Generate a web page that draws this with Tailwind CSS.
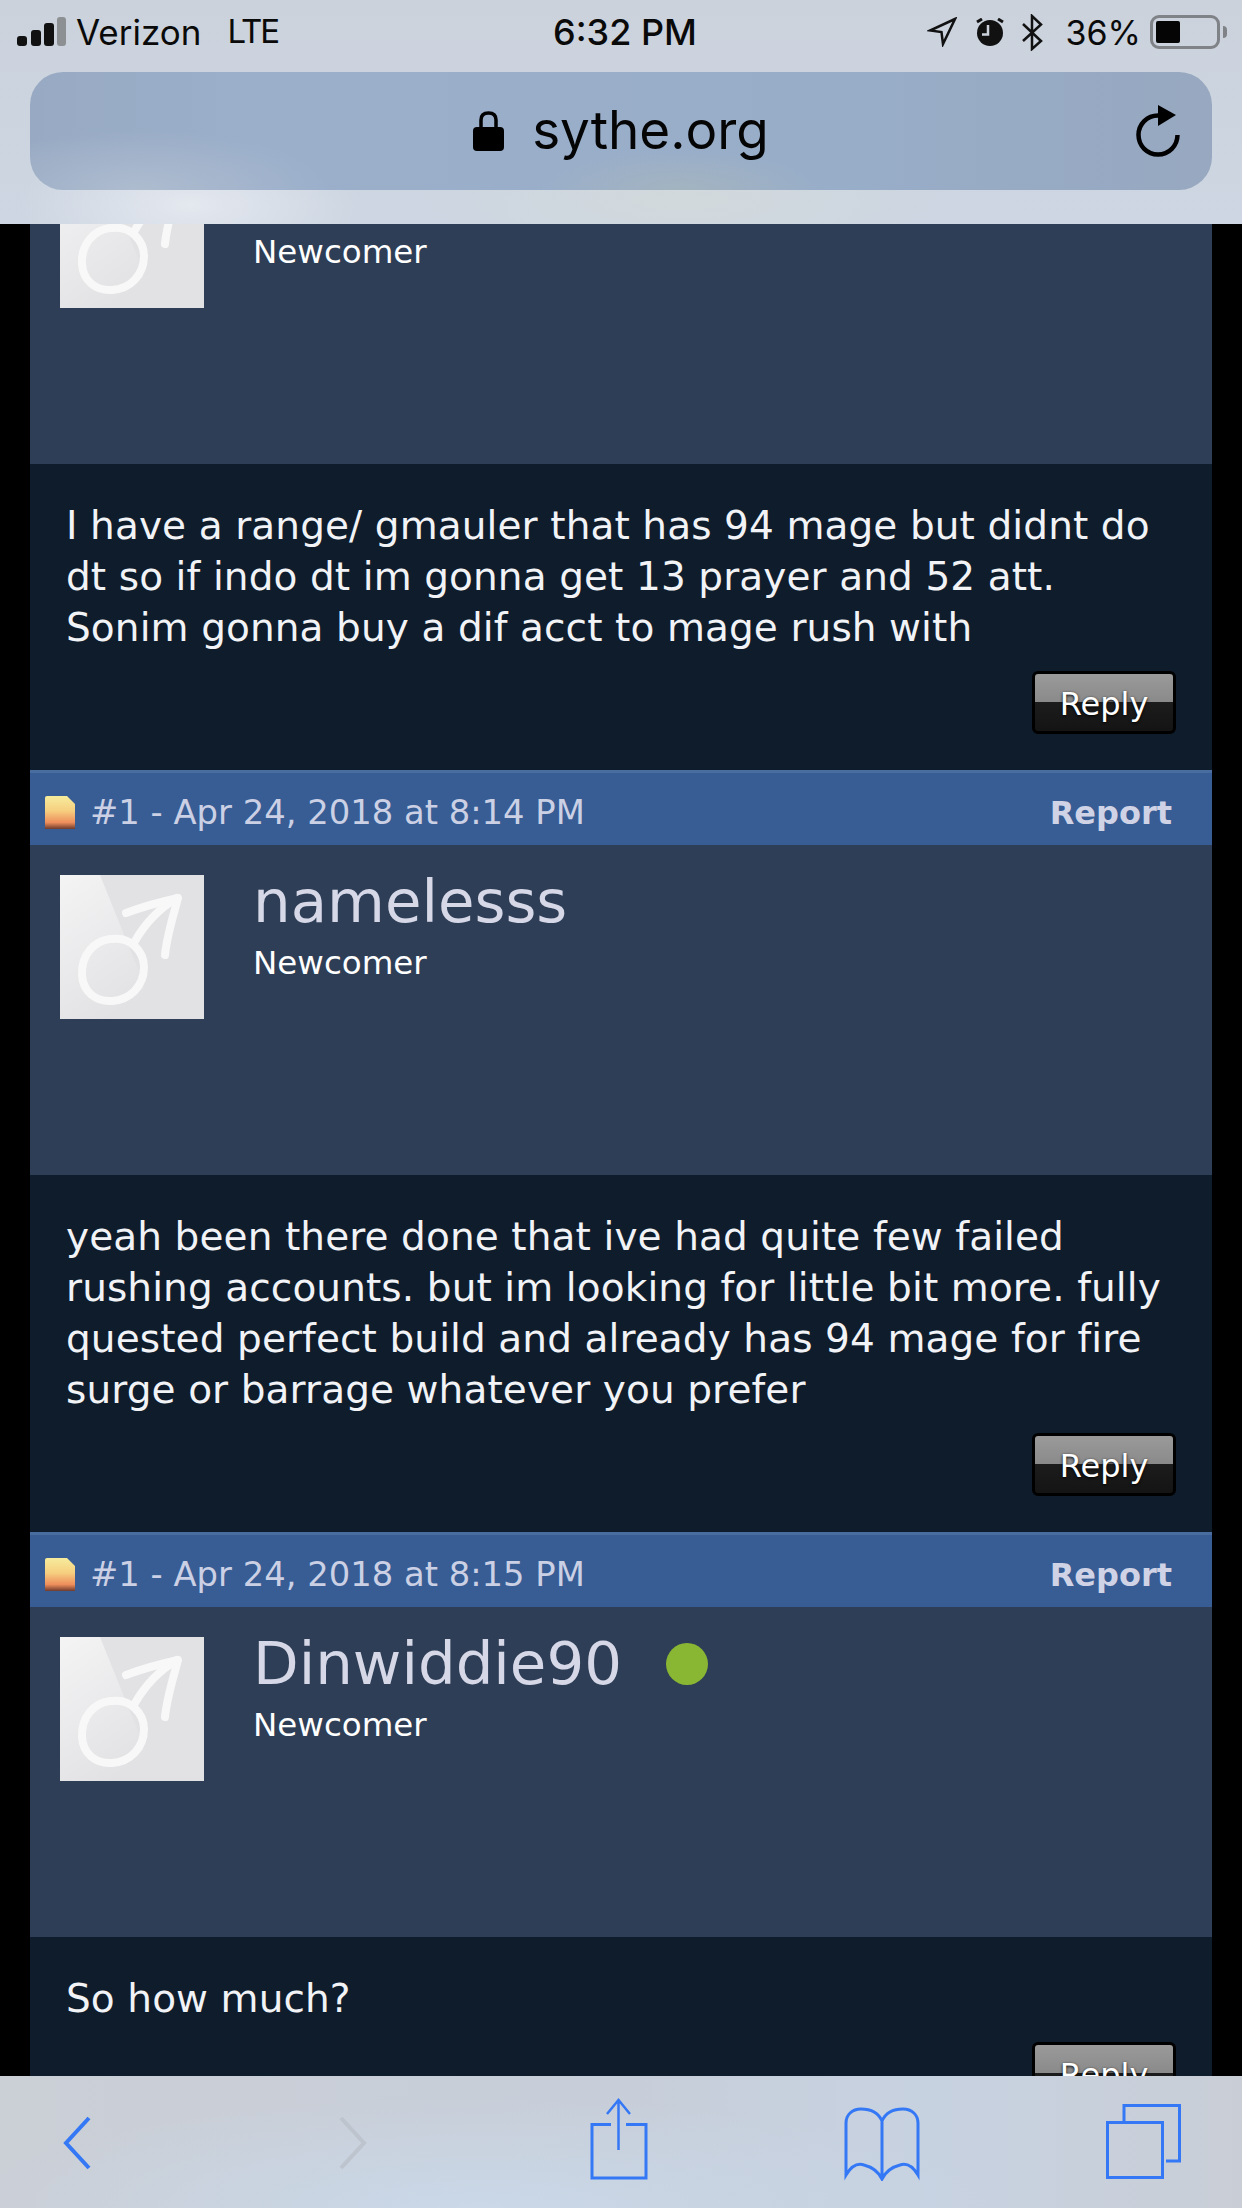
<!DOCTYPE html>
<html lang="en">
<head>
    <meta charset="UTF-8">
    <meta name="viewport" content="width=device-width, initial-scale=1.0">
    <title>sythe.org</title>
    <script src="https://cdn.jsdelivr.net/npm/@tailwindcss/browser@4"></script>
</head>
<body class="bg-black font-['DejaVu_Sans',sans-serif]">
    <!-- shared avatar -->
    <svg width="0" height="0" class="absolute">
        <defs>
            <linearGradient id="wedge" x1="0" y1="0" x2="0.5" y2="1">
                <stop offset="0" stop-color="#f4f4f5"/>
                <stop offset="1" stop-color="#e2e2e4"/>
            </linearGradient>
            <linearGradient id="note" x1="0" y1="0" x2="0" y2="1">
                <stop offset="0" stop-color="#f6ec9c"/>
                <stop offset="0.45" stop-color="#f6cf80"/>
                <stop offset="0.8" stop-color="#ee8f5c"/>
                <stop offset="1" stop-color="#6e3a2c"/>
            </linearGradient>
            <symbol id="male" viewBox="0 0 144 144">
                <rect width="144" height="144" fill="#e2e2e4"/>
                <path d="M0 0H40L98 144H0Z" fill="url(#wedge)"/>
                <g fill="none" stroke="#f8f8f9" stroke-width="8" stroke-linecap="round" stroke-linejoin="round">
                    <path d="M50 64C34 66 21 80 22 100C23 117 36 127 52 126C70 125 84 111 84 92C84 76 70 62 53 64"/>
                    <path d="M75 66C86 47 100 33 117 23"/>
                    <path d="M66 38C82 32 100 27 118 23C113 42 107 60 105 80"/>
                </g>
            </symbol>
            <symbol id="post" viewBox="0 0 30 33">
                <path d="M0 2Q0 0 2 0H22L30 8V33H0Z" fill="url(#note)"/>
            </symbol>
        </defs>
    </svg>

    <div class="w-[1242px] h-[2208px] flex flex-col overflow-hidden">
        <!-- safari top bar -->
        <header class="h-[224px] shrink-0 relative z-10 bg-[radial-gradient(ellipse_170px_70px_at_190px_205px,#e4e8ef,transparent),radial-gradient(ellipse_260px_60px_at_680px_200px,#d2d9dc,transparent),linear-gradient(#cbd2dc,#cdd6e2)]">
            <div class="h-[64px] flex items-center justify-between relative text-[#0a0a0a] font-['Inter',sans-serif]">
                <div class="flex items-center pl-[17px]">
                    <svg width="50" height="30" viewBox="0 0 50 30">
                        <rect x="0" y="19" width="10" height="10" rx="3" fill="#111"/>
                        <rect x="14" y="13" width="10" height="16" rx="3" fill="#111"/>
                        <rect x="27" y="6" width="10" height="23" rx="3" fill="#111"/>
                        <rect x="40" y="0" width="9" height="29" rx="3" fill="#8d9093"/>
                    </svg>
                    <span class="ml-[9px] text-[35px]">Verizon</span>
                    <span class="ml-[26px] text-[33px] tracking-[-2px]">LTE</span>
                </div>
                <span class="absolute left-[553px] text-[36px] font-medium">6:32 PM</span>
                <div class="flex items-center pr-[22px]">
                    <svg width="30" height="30" viewBox="0 0 30 30">
                        <path d="M28 2L3 13.500L14.500 15L16 27Z" fill="none" stroke="#111" stroke-width="2.500"/>
                    </svg>
                    <svg width="28" height="28" viewBox="0 0 28 28" class="ml-[19px]">
                        <circle cx="14" cy="15" r="13" fill="#111"/>
                        <path d="M12 7V16.500H6" fill="none" stroke="#cbd2dc" stroke-width="2.500"/>
                        <path d="M1 4L6 1M27 4L22 1" stroke="#111" stroke-width="3"/>
                    </svg>
                    <svg width="21" height="37" viewBox="0 0 21 37" class="ml-[18px]">
                        <path d="M1 10L19 27L10 35V2L19 10.500L1 27" fill="none" stroke="#111" stroke-width="2.500"/>
                    </svg>
                    <span class="ml-[23px] text-[34px]">36%</span>
                    <div class="ml-[9px] w-[70px] h-[34px] rounded-[9px] border-[3px] border-[#7f8287] p-[3px] relative">
                        <div class="w-[24px] h-full rounded-[2px] bg-[#050505]"></div>
                        <div class="absolute -right-[10px] top-[8px] w-[4px] h-[12px] rounded-r-full bg-[#7f8287]"></div>
                    </div>
                </div>
            </div>
            <div class="mt-[8px] mx-[30px] h-[118px] rounded-[33px] flex items-center justify-center relative bg-[radial-gradient(ellipse_190px_60px_at_110px_118px,#aebccf,transparent),radial-gradient(ellipse_140px_40px_at_650px_118px,#a3b4c0,transparent),linear-gradient(90deg,#98aac3,#9bafcb_20%,#98adc8_70%,#97a8c0)]">
                <svg width="31" height="40" viewBox="0 0 31 40" class="mr-[28px]">
                    <path d="M8 18V9C8 4 11 2 15.500 2C20 2 23 4 23 9V18" fill="none" stroke="#000" stroke-width="3.500"/>
                    <rect x="0" y="16" width="31" height="24" rx="4" fill="#000"/>
                </svg>
                <span class="text-[53px] text-[#050505] font-['Inter',sans-serif]">sythe.org</span>
                <svg width="44" height="52" viewBox="0 0 44 52" class="absolute right-[32px] top-[33px]">
                    <path d="M41.500 30A19.500 19.500 0 1 1 22 10.500" fill="none" stroke="#000" stroke-width="4.500"/>
                    <path d="M22 0L40 10L22 21Z" fill="#000"/>
                </svg>
            </div>
        </header>

        <!-- thread -->
        <main class="flex-1 min-h-0 overflow-hidden bg-black px-[30px]">
            <div class="-mt-[90px]">
                <section class="h-[330px] bg-[#2d3e56] p-[30px] flex">
                    <svg width="144" height="144" class="shrink-0"><use href="#male"/></svg>
                    <div class="ml-[49px] pt-[65px]">
                        <p class="text-[32.500px] leading-[46px] text-white">Newcomer</p>
                    </div>
                </section>
                <section class="bg-[#0f1c2b] px-[36px] pt-[36px] pb-[36px]">
                    <p class="text-[39px] leading-[51px] tracking-[0.100px] text-[#f1f3f6]">I have a range/ gmauler that has 94 mage but didnt do dt so if indo dt im gonna get 13 prayer and 52 att. Sonim gonna buy a dif acct to mage rush with</p>
                    <div class="flex justify-end mt-[18px]">
                        <button class="w-[144px] h-[63px] pt-[2px] rounded-[6px] border-[3px] border-black text-[32px] text-white [text-shadow:0_1px_3px_#000] bg-[linear-gradient(#9a9a9a,#8a8a8a_49%,#1c1c1c_50%,#141414)]">Reply</button>
                    </div>
                </section>

                <div class="h-[75px] border-t-[3px] border-[#4a6d9f] bg-[#375d94] flex items-center pl-[15px] pr-[40px] pt-[8px] text-[#cbd0e5]">
                    <svg width="30" height="33" class="-mt-[2px]"><use href="#post"/></svg>
                    <span class="ml-[15px] text-[33.800px]">#1 - Apr 24, 2018 at 8:14 PM</span>
                    <span class="ml-auto text-[32px] font-bold text-[#d0d3e6]">Report</span>
                </div>
                <section class="h-[330px] bg-[#2d3e56] p-[30px] flex">
                    <svg width="144" height="144" class="shrink-0"><use href="#male"/></svg>
                    <div class="ml-[49px]">
                        <p class="text-[59.400px] leading-[54px] text-[#d6d7e7]">namelesss</p>
                        <p class="text-[32.500px] leading-[46px] mt-[11px] text-white">Newcomer</p>
                    </div>
                </section>
                <section class="bg-[#0f1c2b] px-[36px] pt-[36px] pb-[36px]">
                    <p class="text-[39px] leading-[51px] tracking-[0.100px] text-[#f1f3f6]">yeah been there done that ive had quite few failed rushing accounts. but im looking for little bit more. fully quested perfect build and already has 94 mage for fire surge or barrage whatever you prefer</p>
                    <div class="flex justify-end mt-[18px]">
                        <button class="w-[144px] h-[63px] pt-[2px] rounded-[6px] border-[3px] border-black text-[32px] text-white [text-shadow:0_1px_3px_#000] bg-[linear-gradient(#9a9a9a,#8a8a8a_49%,#1c1c1c_50%,#141414)]">Reply</button>
                    </div>
                </section>

                <div class="h-[75px] border-t-[3px] border-[#4a6d9f] bg-[#375d94] flex items-center pl-[15px] pr-[40px] pt-[8px] text-[#cbd0e5]">
                    <svg width="30" height="33" class="-mt-[2px]"><use href="#post"/></svg>
                    <span class="ml-[15px] text-[33.800px]">#1 - Apr 24, 2018 at 8:15 PM</span>
                    <span class="ml-auto text-[32px] font-bold text-[#d0d3e6]">Report</span>
                </div>
                <section class="h-[330px] bg-[#2d3e56] p-[30px] flex">
                    <svg width="144" height="144" class="shrink-0"><use href="#male"/></svg>
                    <div class="ml-[49px]">
                        <div class="flex items-center">
                            <p class="text-[59.400px] leading-[54px] text-[#d6d7e7]">Dinwiddie90</p>
                            <span class="ml-[44px] w-[42px] h-[42px] rounded-full bg-[#8ab733]"></span>
                        </div>
                        <p class="text-[32.500px] leading-[46px] mt-[11px] text-white">Newcomer</p>
                    </div>
                </section>
                <section class="bg-[#0f1c2b] px-[36px] pt-[36px] pb-[36px]">
                    <p class="text-[39px] leading-[51px] tracking-[0.100px] text-[#f1f3f6]">So how much?</p>
                    <div class="flex justify-end mt-[18px]">
                        <button class="w-[144px] h-[63px] pt-[2px] rounded-[6px] border-[3px] border-black text-[32px] text-white [text-shadow:0_1px_3px_#000] bg-[linear-gradient(#9a9a9a,#8a8a8a_49%,#1c1c1c_50%,#141414)]">Reply</button>
                    </div>
                </section>
            </div>
        </main>

        <!-- safari toolbar -->
        <footer class="h-[132px] shrink-0 relative z-10 flex items-start bg-[radial-gradient(ellipse_520px_110px_at_480px_132px,#cad8e8,transparent),linear-gradient(90deg,#cbcfd6,#c7ced9_50%,#c7d2e1_75%,#c9ced6)]">
            <svg width="30" height="54" viewBox="0 0 30 54" class="ml-[62px] mt-[40px]">
                <path d="M27 2L4 27L27 52" fill="none" stroke="#3478f6" stroke-width="4"/>
            </svg>
            <svg width="30" height="54" viewBox="0 0 30 54" class="ml-[246px] mt-[40px]">
                <path d="M3 2L26 27L3 52" fill="none" stroke="#bdc4ce" stroke-width="4"/>
            </svg>
            <svg width="58" height="82" viewBox="0 0 58 82" class="ml-[222px] mt-[22px]">
                <path d="M21 26.500H2V80H56V26.500H36" fill="none" stroke="#3478f6" stroke-width="3"/>
                <path d="M28.500 2V52M17 16L28.500 2L40 16" fill="none" stroke="#3478f6" stroke-width="2.500"/>
            </svg>
            <svg width="76" height="74" viewBox="0 0 76 74" class="ml-[196px] mt-[31px]">
                <path d="M38 72V14C34 5 25 2 17 2C8 2 2 8 2 16V68C8 58 14 56 20 58C28 60 34 64 38 72C42 64 48 60 56 58C62 56 68 58 74 68V16C74 8 68 2 59 2C51 2 42 5 38 14" fill="none" stroke="#3478f6" stroke-width="3"/>
            </svg>
            <svg width="76" height="76" viewBox="0 0 76 76" class="ml-[186px] mt-[28px]">
                <rect x="1.500" y="18.500" width="55" height="55" fill="none" stroke="#3478f6" stroke-width="3"/>
                <path d="M18 17V1.500H73.500V57H60" fill="none" stroke="#3478f6" stroke-width="3"/>
            </svg>
        </footer>
    </div>
</body>
</html>
